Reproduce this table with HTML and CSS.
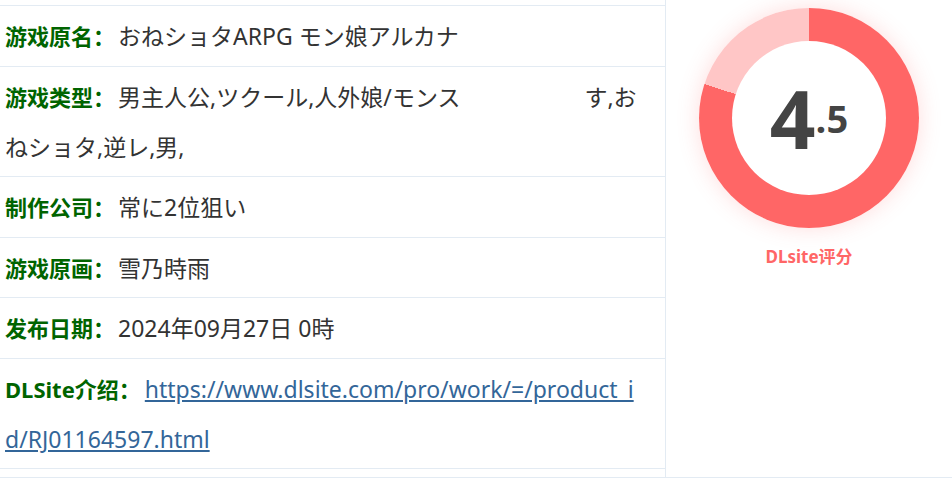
FILE: index.html
```html
<!DOCTYPE html>
<html lang="zh">
<head>
<meta charset="utf-8">
<title>Game info</title>
<link rel="stylesheet" href="styles.css">
</head>
<body>
<div class="page">
  <div class="info">
    <div class="row"><span class="label">游戏原名：</span><span class="val">おねショタARPG モン娘アルカナ</span></div>
    <div class="row"><span class="label">游戏类型：</span><span class="val">男主人公,ツクール,人外娘/モンス<span class="redact r1"></span>す,おねショタ,逆レ,男,<span class="redact r2"></span></span></div>
    <div class="row"><span class="label">制作公司：</span><span class="val">常に2位狙い</span></div>
    <div class="row"><span class="label">游戏原画：</span><span class="val">雪乃時雨</span></div>
    <div class="row"><span class="label">发布日期：</span><span class="val">2024年09月27日 0時</span></div>
    <div class="row"><span class="label">DLSite介绍：</span><a class="link" href="#">https://www.dlsite.com/pro/work/=/product_id/RJ01164597.html</a></div>
  </div>
  <div class="score">
    <div class="donut">
      <div class="hole">
        <span class="big">4</span><span class="small">.5</span>
      </div>
    </div>
    <div class="caption">DLsite评分</div>
  </div>
</div>
</body>
</html>
```

FILE: styles.css
```css
html, body {
  margin: 0;
  padding: 0;
  background: #fff;
}
body {
  font-family: "Noto Sans", "Noto Sans CJK SC", sans-serif;
  color: #333;
}
.page {
  display: flex;
  width: 952px;
  height: 477px;
  border-bottom: 1px solid #e3ebf3;
}
.info {
  width: 666px;
  border-right: 1px solid #e3ebf3;
  padding-top: 5px;
  box-sizing: border-box;
}
.row {
  border-top: 1px solid #e3ebf3;
  padding: 5px 21px 4.5px 5px;
  font-size: 23px;
  line-height: 50px;
}
.row:last-child {
  border-bottom: 1px solid #e3ebf3;
}
.label {
  font-weight: bold;
  font-size: 22px;
  color: #006400;
}
.val {
  margin-left: 3px;
  font-weight: 400;
}
.redact {
  display: inline-block;
  height: 10px;
}
.r1 { width: 124px; }
.r2 { width: 180px; }
.link {
  margin-left: 4px;
  color: #336699;
  word-break: break-all;
}
.score {
  flex: 1;
  display: flex;
  flex-direction: column;
  align-items: center;
  padding-top: 8px;
}
.donut {
  width: 220px;
  height: 220px;
  border-radius: 50%;
  background: conic-gradient(#ff6666 0 80%, #ffc6c6 80% 100%);
  box-shadow: 0 0 22px rgba(255, 102, 102, 0.22);
  display: flex;
  align-items: center;
  justify-content: center;
}
.hole {
  width: 154px;
  height: 154px;
  border-radius: 50%;
  background: #fff;
  display: flex;
  align-items: center;
  justify-content: center;
  color: #444;
  font-family: "Open Sans", sans-serif;
  font-weight: bold;
}
.big {
  font-size: 80px;
  line-height: 1;
}
.small {
  font-size: 38px;
  line-height: 1;
}
.caption {
  margin-top: 15px;
  color: #ff6666;
  font-weight: bold;
  font-size: 17px;
  font-family: "Noto Sans", "Noto Sans CJK SC", sans-serif;
}
```
